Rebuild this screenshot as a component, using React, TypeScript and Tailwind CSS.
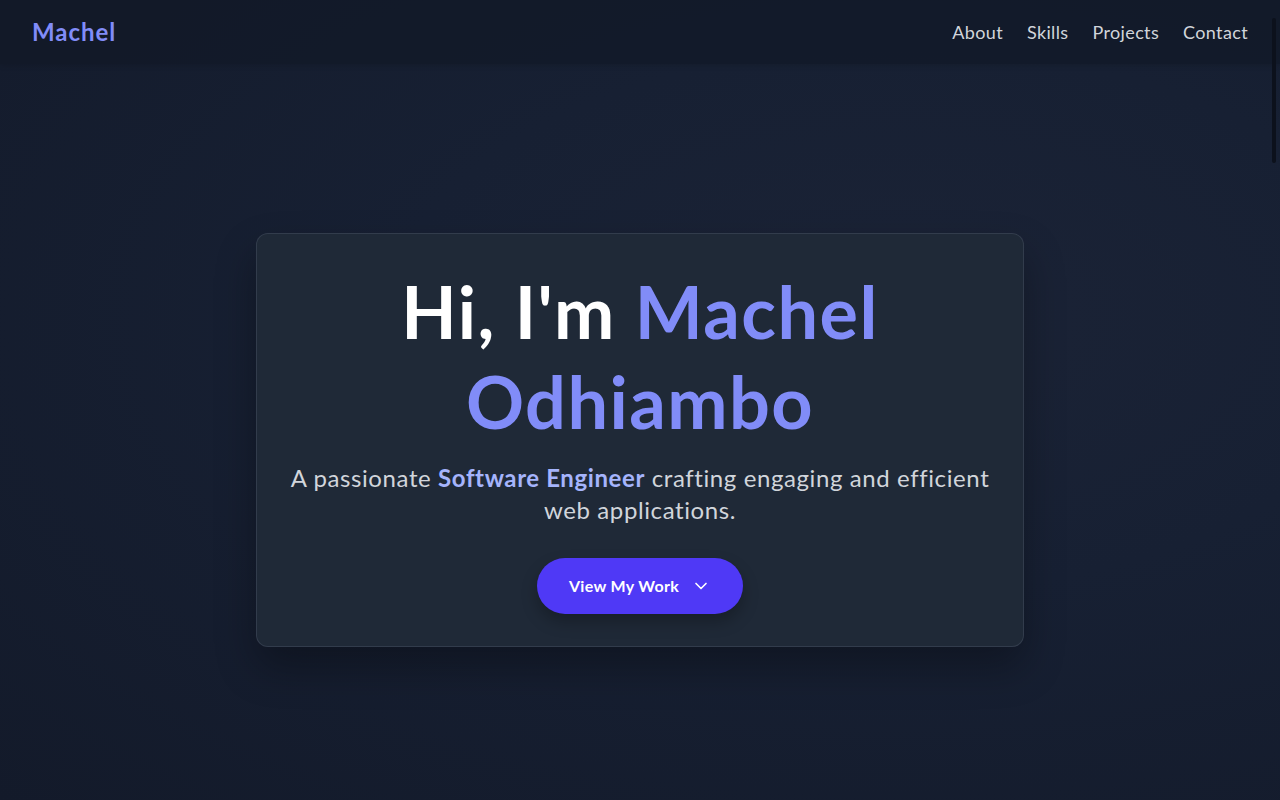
import React from "react";

function ChevronDown() {
  return (
    <svg width="20" height="20" viewBox="0 0 24 24" fill="none" stroke="currentColor" strokeWidth="2" strokeLinecap="round" strokeLinejoin="round">
      <path d="m6 9 6 6 6-6" />
    </svg>
  );
}

export default function App() {
  return (
    <div
      className="relative min-h-[800px] w-full overflow-hidden text-white bg-[radial-gradient(ellipse_at_70%_40%,#1b2336_0%,#172033_40%,#131a2a_100%)]"
      style={{ fontFamily: "Lato, 'Noto Sans', sans-serif" }}
    >
      <header className="flex h-16 items-center justify-between bg-[#111827]/70 px-8 shadow-[0_1px_6px_rgba(0,0,0,0.15)]">
        <a className="text-2xl font-bold tracking-[0.04em] text-[#818cf8]">Machel</a>
        <nav className="flex items-center gap-6 text-lg tracking-[0.02em] text-[#d1d5db]">
          <a>About</a>
          <a>Skills</a>
          <a>Projects</a>
          <a>Contact</a>
        </nav>
      </header>

      <main className="flex justify-center pt-[169px]">
        <div className="w-[768px] rounded-xl border border-[#374151]/80 bg-[#1f2937] p-8 text-center shadow-[0_20px_40px_rgba(0,0,0,0.3)]">
          <h1 className="mb-4 text-7xl font-bold leading-[90px] tracking-[0.02em] text-white">
            Hi, I'm <span className="text-[#818cf8]">Machel Odhiambo</span>
          </h1>
          <p className="mb-8 text-2xl leading-8 tracking-[0.025em] text-[#d1d5db]">
            A passionate <span className="font-bold text-[#a5b4fc]">Software Engineer</span> crafting engaging and efficient web applications.
          </p>
          <button className="inline-flex h-14 items-center gap-3 rounded-full bg-[#4f39f6] px-8 text-base font-bold tracking-[0.02em] text-white shadow-[0_8px_16px_rgba(0,0,0,0.25)]">
            View My Work
            <ChevronDown />
          </button>
        </div>
      </main>

      <div className="absolute right-[4px] top-[18px] h-[145px] w-[4px] rounded-full bg-[#0c111c]" />
    </div>
  );
}
